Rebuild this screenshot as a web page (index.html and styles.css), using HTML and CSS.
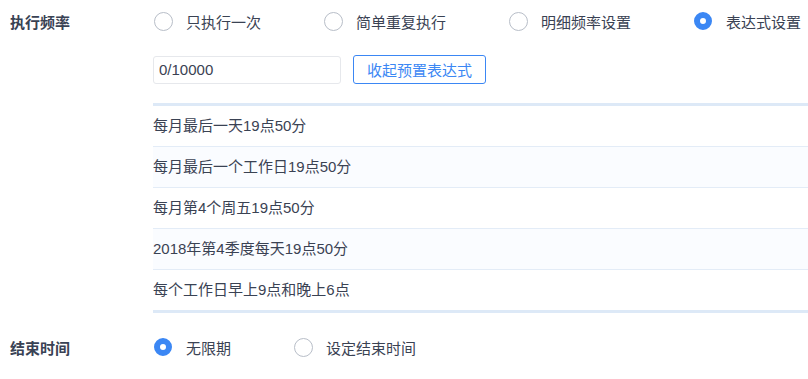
FILE: index.html
```html
<!DOCTYPE html>
<html lang="zh-CN">
<head>
    <meta charset="UTF-8">
    <title>执行频率</title>
    <link rel="stylesheet" href="styles.css">
</head>
<body>
    <div class="form">
        <div class="form-row">
            <div class="form-label">执行频率</div>
            <div class="form-field">
                <label class="radio"><span class="radio-dot"></span>只执行一次</label>
                <label class="radio"><span class="radio-dot"></span>简单重复执行</label>
                <label class="radio"><span class="radio-dot"></span>明细频率设置</label>
                <label class="radio checked"><span class="radio-dot"></span>表达式设置</label>
            </div>
        </div>

        <div class="expr-block">
            <div class="expr-tools">
                <input class="expr-input" type="text" value="0/10000">
                <button class="btn-outline">收起预置表达式</button>
            </div>
            <ul class="preset-list">
                <li>每月最后一天19点50分</li>
                <li>每月最后一个工作日19点50分</li>
                <li>每月第4个周五19点50分</li>
                <li>2018年第4季度每天19点50分</li>
                <li>每个工作日早上9点和晚上6点</li>
            </ul>
        </div>

        <div class="form-row end-row">
            <div class="form-label">结束时间</div>
            <div class="form-field">
                <label class="radio checked"><span class="radio-dot"></span>无限期</label>
                <label class="radio"><span class="radio-dot"></span>设定结束时间</label>
            </div>
        </div>
    </div>
</body>
</html>
```

FILE: styles.css
```css
body {
    margin: 0;
    font-family: "Liberation Sans", "Noto Sans CJK SC", sans-serif;
    font-size: 15px;
    color: #3a4253;
    background: #fff;
}
.form {
    width: 808px;
    overflow: hidden;
}
.form-row {
    display: flex;
    align-items: center;
    height: 42px;
}
.form-label {
    flex-shrink: 0;
    width: 143px;
    padding-left: 10px;
    font-weight: bold;
    color: #394254;
}
.form-field {
    display: flex;
    align-items: center;
}
.radio {
    display: flex;
    align-items: center;
    flex-shrink: 0;
    margin-right: 62px;
    white-space: nowrap;
    cursor: pointer;
}
.radio-dot {
    width: 17px;
    height: 17px;
    border: 1px solid #b8bec8;
    border-radius: 50%;
    margin-left: 1px;
    margin-right: 13px;
    box-sizing: content-box;
}
.radio.checked .radio-dot {
    width: 6px;
    height: 6px;
    border: 6px solid #3b87f4;
    margin-right: 14px;
}
.expr-block {
    padding-left: 153px;
    margin-top: 13px;
}
.expr-tools {
    display: flex;
    align-items: center;
    gap: 12px;
}
.expr-input {
    width: 188px;
    height: 28px;
    box-sizing: border-box;
    border: 1px solid #e6e8ec;
    border-radius: 3px;
    padding: 0 5px;
    font-family: inherit;
    font-size: 15px;
    color: #3a4253;
    outline: none;
}
.btn-outline {
    height: 29px;
    padding: 0 13px;
    border: 1px solid #3b87f4;
    border-radius: 3px;
    background: #fff;
    color: #3b87f4;
    font-family: inherit;
    font-size: 15px;
    cursor: pointer;
}
.preset-list {
    list-style: none;
    margin: 19px 0 0;
    padding: 0;
    border-top: 3px solid #dde9f7;
    border-bottom: 3px solid #dde9f7;
}
.preset-list li {
    height: 40px;
    line-height: 40px;
    border-top: 1px solid #e3ecf7;
}
.preset-list li:first-child {
    border-top: none;
}
.preset-list li:nth-child(even) {
    background: #fafcff;
}
.end-row {
    margin-top: 13px;
}
```
